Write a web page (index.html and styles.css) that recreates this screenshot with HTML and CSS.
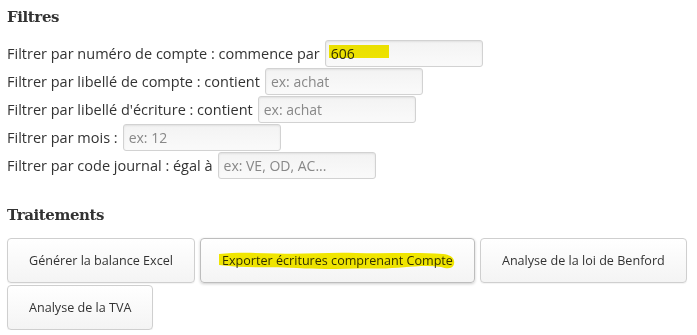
FILE: index.html
```html
<!DOCTYPE html>
<html lang="fr">
<head>
    <meta charset="UTF-8">
    <meta name="viewport" content="width=device-width, initial-scale=1.0">
    <title>Filtres et traitements</title>
    <link rel="stylesheet" href="styles.css">
</head>
<body>
    <div class="container">
        <h3>Filtres</h3>
        <div class="filters">
            <div class="filter-row">
                <label for="numCompte">Filtrer par numéro de compte : commence par</label>
                <span class="marked">
                    <input type="text" id="numCompte" value="606">
                    <span class="marker marker-input"></span>
                </span>
            </div>
            <div class="filter-row">
                <label for="libCompte">Filtrer par libellé de compte : contient</label>
                <input type="text" id="libCompte" placeholder="ex: achat">
            </div>
            <div class="filter-row">
                <label for="libEcriture">Filtrer par libellé d'écriture : contient</label>
                <input type="text" id="libEcriture" placeholder="ex: achat">
            </div>
            <div class="filter-row">
                <label for="mois">Filtrer par mois :</label>
                <input type="text" id="mois" placeholder="ex: 12">
            </div>
            <div class="filter-row">
                <label for="journal">Filtrer par code journal : égal à</label>
                <input type="text" id="journal" placeholder="ex: VE, OD, AC...">
            </div>
        </div>

        <h3 class="second">Traitements</h3>
        <div class="button-group">
            <button class="action-btn">Générer la balance Excel</button>
            <button class="action-btn active">
                <span class="marked-text">Exporter écritures comprenant Compte<svg class="marker-wave" viewBox="0 0 240 18" preserveAspectRatio="none"><path d="M1 2 C20 0 40 1 60 1.5 C90 2.5 110 0 140 1 C170 2 200 0 228 2 C238 3 240 8 239 12 C238 17 232 17 226 15 C205 12 185 17 160 16.5 C130 16 110 18 80 16 C55 14 30 17 1 13 Z" fill="#f5ea00"/></svg></span>
            </button>
            <button class="action-btn">Analyse de la loi de Benford</button>
            <button class="action-btn">Analyse de la TVA</button>
        </div>
    </div>
</body>
</html>
```

FILE: styles.css
```css
body {
    font-family: "Open Sans", Arial, sans-serif;
    margin: 0;
    padding: 0;
    background: white;
    color: #333;
}

.container {
    padding: 0 7px;
}

h3 {
    font-family: "DejaVu Serif", Georgia, serif;
    font-size: 15px;
    letter-spacing: -0.4px;
    font-weight: bold;
    color: #333;
    margin: 8px 0 13px;
}

h3.second {
    margin-top: 27px;
    margin-bottom: 14px;
}

.filter-row {
    display: flex;
    align-items: center;
    gap: 5px;
    height: 28px;
    font-size: 14.5px;
}

.filter-row input {
    width: 158px;
    height: 27px;
    box-sizing: border-box;
    padding: 2px 5px;
    font-family: "Open Sans", Arial, sans-serif;
    font-size: 14px;
    color: #333;
    background: linear-gradient(#f3f3f3, #fafafa);
    border: 1px solid #d2d2d2;
    border-radius: 3px;
    box-shadow: inset 0 1px 2px rgba(0, 0, 0, 0.08);
}

.filter-row input::placeholder {
    color: #888;
}

/* highlighter stroke over the "606" value */
.marked {
    position: relative;
    display: inline-block;
}

.marker {
    position: absolute;
    pointer-events: none;
}

.marker-input {
    left: 4px;
    top: 5px;
    width: 60px;
    height: 13px;
    background: #f5ea00;
    mix-blend-mode: multiply;
}

.button-group {
    display: flex;
    flex-wrap: wrap;
    column-gap: 5px;
    row-gap: 2px;
}

.action-btn {
    height: 45px;
    padding: 0 21px;
    font-family: "Open Sans", Arial, sans-serif;
    font-size: 12.6px;
    color: #333;
    background: linear-gradient(#ffffff, #f4f4f4);
    border: 1px solid #cfcfcf;
    border-radius: 4px;
    box-shadow: 0 1px 1px rgba(0, 0, 0, 0.05);
}

.action-btn.active {
    border-color: #bdbdbd;
    box-shadow: 0 1px 3px rgba(0, 0, 0, 0.2);
}

.marked-text {
    position: relative;
    display: inline-block;
}

.marker-wave {
    position: absolute;
    left: -4px;
    top: 0;
    width: calc(100% + 6px);
    height: 18px;
    mix-blend-mode: multiply;
    pointer-events: none;
}
```
